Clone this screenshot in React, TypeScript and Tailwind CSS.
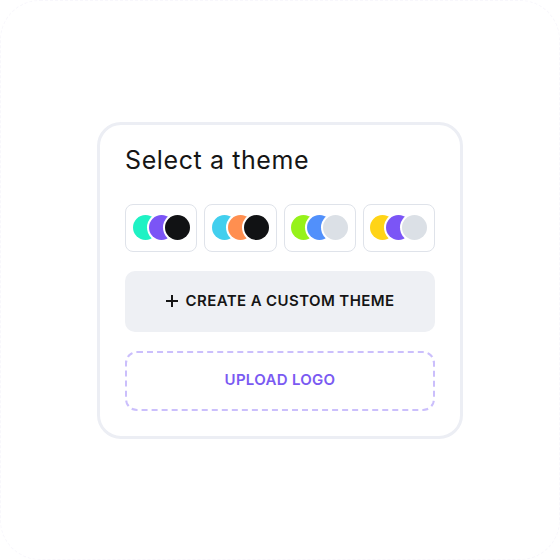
const themes = [
  ["#1ef2c4", "#7b55f6", "#111214"],
  ["#42cfee", "#ff8f50", "#111214"],
  ["#96f21a", "#5190fb", "#dbe0e6"],
  ["#ffd417", "#7b55f6", "#dbe0e6"],
];

const Swatch = ({ colors }: { colors: string[] }) => {
  return (
    <button className="flex h-12 items-center justify-center rounded-lg border-[1.5px] border-[#dfe3ea] bg-white">
      <span className="flex items-center">
        {colors.map((color, i) => (
          <span
            key={`swatch_color_${i}`}
            className={`h-[25px] w-[25px] rounded-full ring-2 ring-white ${
              i > 0 ? "-ml-[9px]" : ""
            }`}
            style={{ backgroundColor: color }}
          />
        ))}
      </span>
    </button>
  );
};

const App = () => {
  return (
    <div
      className="flex h-[560px] w-[560px] items-center justify-center rounded-[40px] border border-dashed border-[#f8f7fc] bg-white"
      style={{ fontFamily: "Inter, 'Open Sans', sans-serif" }}
    >
      <div className="flex w-[366px] flex-col rounded-[24px] border-[3px] border-[#eceef4] bg-white px-[25px] pb-[25px] pt-5">
        <h2 className="text-[25px] font-normal leading-[30px] tracking-[0.6px] text-[#151515]">
          Select a theme
        </h2>

        <div className="mt-[29px] grid grid-cols-4 gap-[7px]">
          {themes.map((colors, i) => (
            <Swatch colors={colors} key={`theme_${i}`} />
          ))}
        </div>

        <button className="mt-[19px] flex h-[61px] items-center justify-center gap-2 rounded-[10px] bg-[#eef0f4] text-[15px] font-semibold uppercase tracking-[0.4px] text-[#151515]">
          <svg
            width="12"
            height="12"
            viewBox="0 0 12 12"
            fill="none"
            stroke="#151515"
            strokeWidth="2"
          >
            <path d="M6 0v12M0 6h12" />
          </svg>
          Create a custom theme
        </button>

        <button className="mt-[19px] flex h-[60px] items-center justify-center rounded-xl border-2 border-dashed border-[#cbbffc] text-[15px] font-semibold uppercase tracking-[0.3px] text-[#7a5af2]">
          Upload logo
        </button>
      </div>
    </div>
  );
};

export default App;
